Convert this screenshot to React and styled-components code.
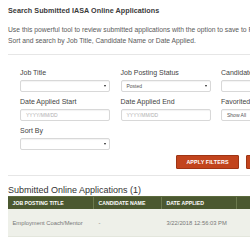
import React from "react";
import styled, { createGlobalStyle } from "styled-components";

const Global = createGlobalStyle`
  html, body { margin: 0; padding: 0; background: #fff; overflow: hidden; }
  body { font-family: "Liberation Sans", Arial, sans-serif; color: #444; }
`;

const Page = styled.div`
  width: 250px;
  height: 250px;
  overflow: hidden;
  padding: 6px 0 0 8px;
  box-sizing: border-box;
`;

const Inner = styled.div`
  width: 330px;
`;

const Title = styled.h2`
  margin: 0;
  font-size: 7.2px;
  line-height: 10px;
  font-weight: 700;
  color: #3a3a3a;
  letter-spacing: 0.05px;
`;

const Desc = styled.p`
  margin: 8px 0 0;
  font-size: 6.75px;
  line-height: 11px;
  color: #5a5a5a;
  white-space: nowrap;
`;

const Rule = styled.div`
  height: 1px;
  background: #e6e6e6;
  margin: ${(p) => p.$m};
`;

const FormGrid = styled.div`
  display: grid;
  grid-template-columns: 90px 90px 90px;
  column-gap: 10.5px;
  row-gap: 5px;
  padding-left: 12px;
`;

const Field = styled.div`
  display: flex;
  flex-direction: column;
  gap: 3px;
`;

const Label = styled.label`
  font-size: 7px;
  line-height: 9px;
  color: #444;
  white-space: nowrap;
`;

const Box = styled.div`
  position: relative;
  height: 12px;
  box-sizing: border-box;
  border: 1px solid #d8d8d8;
  border-radius: 2px;
  box-shadow: inset 0 1px 1px rgba(0, 0, 0, 0.05);
  background: #fff;
  display: flex;
  align-items: center;
  padding-left: 5px;
  font-size: 5px;
  color: ${(p) => (p.$placeholder ? "#b0b0b0" : "#555")};
`;

const Caret = styled.span`
  position: absolute;
  right: 3px;
  top: 4px;
  width: 0;
  height: 0;
  border-left: 1.2px solid transparent;
  border-right: 1.2px solid transparent;
  border-top: 2px solid #222;
`;

const ButtonRow = styled.div`
  display: flex;
  gap: 7px;
  padding-left: 168px;
  margin-top: 5px;
`;

const Button = styled.button`
  height: 14px;
  width: 63px;
  padding: 0;
  border: 1px solid #9e3414;
  border-radius: 1px;
  background: #c2441d;
  color: #fff;
  font-family: "Liberation Sans", Arial, sans-serif;
  font-weight: 700;
  font-size: 5.4px;
  letter-spacing: 0.1px;
  text-transform: uppercase;
`;

const SubTitle = styled.h3`
  margin: 0;
  font-size: 9px;
  line-height: 12px;
  font-weight: 400;
  color: #333;
`;

const Table = styled.div`
  margin-top: 0;
  border-top: 1px solid #5b6a3c;
`;

const HeadRow = styled.div`
  display: grid;
  grid-template-columns: 86px 68px 75px 60px;
  background: #4b5830;
  height: 12px;
`;

const HeadCell = styled.div`
  border-right: 1px solid #6c7a4e;
  color: #fff;
  font-weight: 700;
  font-size: 5.2px;
  line-height: 12px;
  padding-left: 4.5px;
  text-transform: uppercase;
  white-space: nowrap;
  overflow: hidden;
`;

const BodyRow = styled.div`
  display: grid;
  grid-template-columns: 86px 68px 75px 60px;
  background: #eef0e9;
  height: 27px;
  border-bottom: 1px solid #e3e6dc;
`;

const BodyCell = styled.div`
  color: #777;
  font-size: 5.8px;
  padding-left: 4.5px;
  display: flex;
  align-items: center;
  white-space: nowrap;
`;

function Select({ value }) {
  return (
    <Box>
      {value}
      <Caret />
    </Box>
  );
}

export default function App() {
  return (
    <>
      <Global />
      <Page>
        <Inner>
          <Title>Search Submitted IASA Online Applications</Title>
          <Desc>
            Use this powerful tool to review submitted applications with the option to save to PDF.
            <br />
            Sort and search by Job Title, Candidate Name or Date Applied.
          </Desc>
          <Rule $m="8px 0 13px" />
          <FormGrid>
            <Field>
              <Label>Job Title</Label>
              <Select value="" />
            </Field>
            <Field>
              <Label>Job Posting Status</Label>
              <Select value="Posted" />
            </Field>
            <Field>
              <Label>Candidate Name</Label>
              <Box />
            </Field>
            <Field>
              <Label>Date Applied Start</Label>
              <Box $placeholder>YYYY/MM/DD</Box>
            </Field>
            <Field>
              <Label>Date Applied End</Label>
              <Box $placeholder>YYYY/MM/DD</Box>
            </Field>
            <Field>
              <Label>Favorited</Label>
              <Select value="Show All" />
            </Field>
            <Field>
              <Label>Sort By</Label>
              <Select value="" />
            </Field>
          </FormGrid>
          <ButtonRow>
            <Button>Apply Filters</Button>
            <Button>Clear Filters</Button>
          </ButtonRow>
          <Rule $m="6px 0 8px" />
          <SubTitle>Submitted Online Applications (1)</SubTitle>
          <Table>
            <HeadRow>
              <HeadCell>Job Posting Title</HeadCell>
              <HeadCell>Candidate Name</HeadCell>
              <HeadCell>Date Applied</HeadCell>
              <HeadCell />
            </HeadRow>
            <BodyRow>
              <BodyCell>Employment Coach/Mentor</BodyCell>
              <BodyCell>-</BodyCell>
              <BodyCell>3/22/2018 12:56:03 PM</BodyCell>
              <BodyCell />
            </BodyRow>
          </Table>
        </Inner>
      </Page>
    </>
  );
}
